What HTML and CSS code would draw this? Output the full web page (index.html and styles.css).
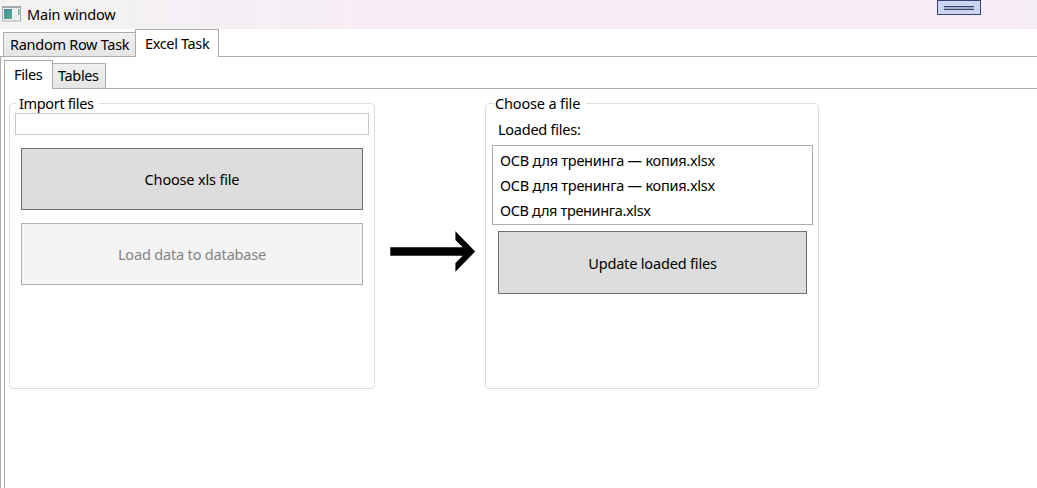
FILE: index.html
```html
<!DOCTYPE html>
<html lang="en">
<head>
<meta charset="utf-8">
<title>Main window</title>
<link rel="stylesheet" href="styles.css">
</head>
<body>
<header class="titlebar">
  <svg class="app-icon" width="19" height="16" viewBox="0 0 19 16">
    <defs><linearGradient id="g" x1="0" y1="0" x2="1" y2="1"><stop offset="0" stop-color="#4688ae"/><stop offset="1" stop-color="#5fae7c"/></linearGradient></defs>
    <rect x=".5" y=".5" width="18" height="14.5" fill="#f2f5f6" stroke="#a5adb4"/>
    <rect x="0" y="0" width="19" height="2" fill="#a3abb2"/>
    <rect x="2" y="3" width="8" height="10" fill="url(#g)"/>
    <rect x="11" y="3" width="4" height="10" fill="#e8edf0"/>
    <rect x="16" y="3" width="1.5" height="6" fill="#6ab59b"/>
  </svg>
  <span class="t-title">Main window</span>
  <div class="toolbar-handle"><i></i></div>
</header>
<main class="tabs-outer">
  <nav class="tabstrip outer">
    <div class="tab t-random">Random Row Task</div>
    <div class="tab active t-excel">Excel Task</div>
  </nav>
  <section class="panel outer-panel">
    <nav class="tabstrip inner">
      <div class="tab active t-files">Files</div>
      <div class="tab t-tables">Tables</div>
    </nav>
    <section class="panel inner-panel">
      <fieldset class="group import">
        <legend class="t-import">Import files</legend>
        <input class="path" type="text" aria-label="Path">
        <button class="t-choose">Choose xls file</button>
        <button class="t-load" disabled>Load data to database</button>
      </fieldset>
      <svg class="arrow" width="86" height="42" viewBox="0 0 86 42">
        <path d="M0.300 16.200H72.800L65.400 9V0.300L85.200 20.500L65.400 40.800V32L72.800 24.800H0.300Z"/>
      </svg>
      <fieldset class="group choose">
        <legend class="t-choosefile">Choose a file</legend>
        <div class="label"><span class="t-loaded">Loaded files:</span></div>
        <ul class="list">
          <li>ОСВ для тренинга — копия.xlsx</li>
          <li>ОСВ для тренинга — копия.xlsx</li>
          <li class="t-short">ОСВ для тренинга.xlsx</li>
        </ul>
        <button class="t-update">Update loaded files</button>
      </fieldset>
    </section>
  </section>
</main>
</body>
</html>
```
FILE: styles.css
```css
* { box-sizing: border-box; }
body {
  margin: 0;
  height: 488px;
  overflow: hidden;
  display: flex;
  flex-direction: column;
  background: #fff;
  color: #000;
  font: 14.5px/20px "Noto Sans", "Open Sans", sans-serif;
  letter-spacing: -0.35px;
  white-space: nowrap;
}
.titlebar {
  position: relative;
  flex: none;
  height: 29px;
  display: flex;
  align-items: center;
  padding: 0 0 1px 2px;
  gap: 6px;
  background: linear-gradient(90deg, #f3f3f3 0, #f3f1f4 100px, #f8edf6 400px, #f8edf6 1005px, #f5eef6 1037px);
}
.t-title { letter-spacing: -0.2px; }
.toolbar-handle {
  position: absolute;
  left: 937px;
  top: 0;
  width: 44px;
  height: 15px;
  border: 1px solid #39437a;
  background: #cbd4f0;
  padding: 5px 6px;
}
.toolbar-handle i {
  display: block;
  height: 4px;
  background: #a5b0ce;
  border: solid #39436a;
  border-width: 1px 0;
}
.tabs-outer { flex: 1; display: flex; flex-direction: column; }
.tabstrip { display: flex; align-items: flex-end; position: relative; }
.outer { height: 27px; padding-left: 3px; }
.inner { height: 28px; }
.tab {
  height: 24px;
  border: 1px solid #acacac;
  border-bottom: 0;
  background: linear-gradient(#f0f0f0, #e5e5e5);
  padding-left: 6px;
  line-height: 22px;
}
.inner .tab { height: 25px; padding-left: 5px; line-height: 23px; }
.tab.active, .inner .tab.active {
  height: 28px;
  margin-bottom: -1px;
  background: #fff;
  z-index: 1;
  line-height: 27px;
  padding-left: 9px;
}
.inner .tab.active { height: 29px; line-height: 27px; }
.outer .t-random { width: 132px; border-right: 0; letter-spacing: -0.28px; }
.outer .t-excel { width: 84px; }
.inner .t-files { width: 49px; }
.inner .t-tables { width: 53px; border-left: 0; }
.panel { flex: 1; border: solid #acacac; border-width: 1px 0 0 1px; }
.outer-panel { padding: 3px 0 0 3px; display: flex; flex-direction: column; }
.inner-panel { display: flex; align-items: flex-start; padding: 4px 0 0 4px; }
.group {
  min-width: 0;
  margin: 0;
  height: 296px;
  border: 1px solid #d5dfe5;
  border-radius: 4px;
  display: flex;
  flex-direction: column;
}
.group legend { height: 20px; margin-left: 6px; padding: 0 0 0 3px; }
.import { width: 366px; padding: 0 5px; }
.choose { width: 334px; padding: 0 5px 0 6px; margin-left: 9px; }
.import legend { width: 83px; margin-left: 1px; }
.choose legend { width: 93px; margin-left: 1px; padding-left: 2px; letter-spacing: -0.15px; }
.path {
  width: 354px;
  height: 22px;
  margin-top: 0;
  border: 1px solid #c8cacc;
  background: #fff;
  flex: none;
}
button {
  display: block;
  width: 342px;
  height: 62px;
  margin: 13px 0 0 6px;
  padding: 0;
  border: 1px solid #707070;
  background: #ddd;
  color: #000;
  font: inherit;
  letter-spacing: -0.17px;
  text-align: center;
}
button:disabled { border-color: #adb2b5; background: #f4f4f4; color: #838383; }
.choose button { width: 309px; height: 63px; margin-top: 6px; }
.arrow { margin: 138px 0 0 15px; flex: none; }
.label { height: 32px; padding: 6px 0 0 6px; letter-spacing: -0.25px; }
.list {
  list-style: none;
  margin: 0;
  padding: 2px 0 0 7px;
  width: 321px;
  height: 80px;
  border: 1px solid #abadb3;
}
.list li { height: 25px; line-height: 25px; letter-spacing: -0.25px; }
.list .t-short { letter-spacing: -0.35px; }
```
